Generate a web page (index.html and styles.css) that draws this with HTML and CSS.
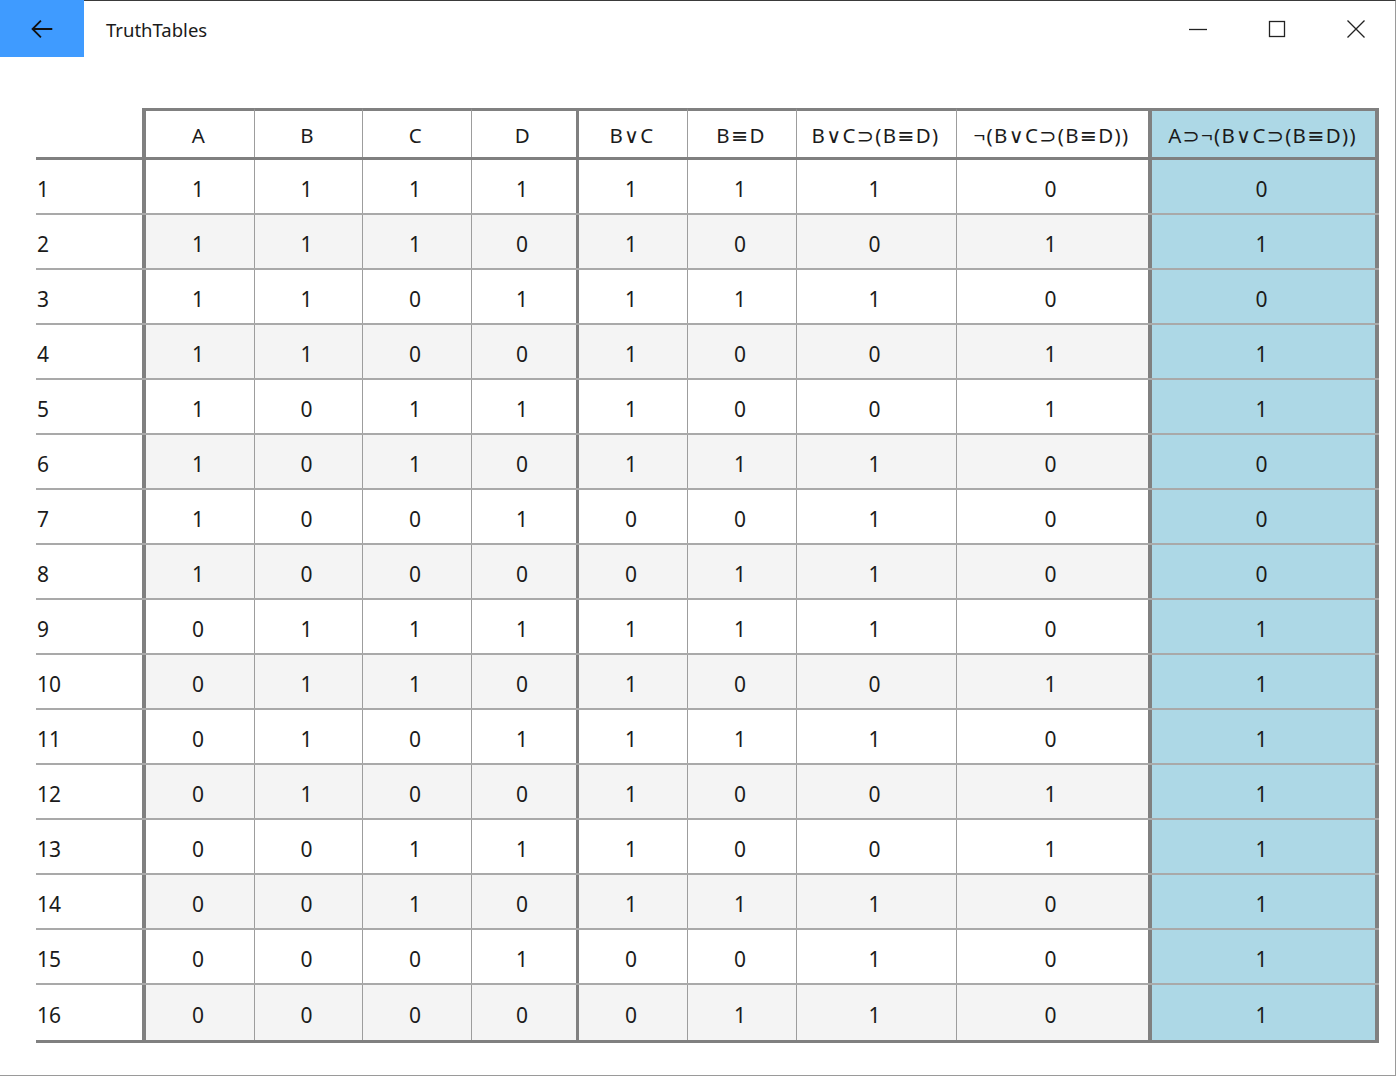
FILE: index.html
```html
<!DOCTYPE html>
<html>
<head>
<meta charset="utf-8">
<link rel="stylesheet" href="styles.css">
</head>
<body>
<div class="window">
  <div class="titlebar">
    <div class="back">
      <svg width="26" height="26" viewBox="0 0 24 24"><path d="M21.5 12H3.5M11 4.3L3.3 12L11 19.7" fill="none" stroke="#111" stroke-width="1.7"/></svg>
    </div>
    <div class="title">TruthTables</div>
    <div class="controls">
      <div class="ctl"><svg width="20" height="20" viewBox="0 0 20 20"><path d="M1 10.5H19" stroke="#222" stroke-width="1.3"/></svg></div>
      <div class="ctl"><svg width="20" height="20" viewBox="0 0 20 20"><rect x="2.5" y="2.5" width="15" height="15" fill="none" stroke="#222" stroke-width="1.3"/></svg></div>
      <div class="ctl"><svg width="20" height="20" viewBox="0 0 20 20"><path d="M1.5 1.5L18.5 18.5M18.5 1.5L1.5 18.5" stroke="#222" stroke-width="1.3"/></svg></div>
    </div>
  </div>
  <div class="content">
    <div class="tt" id="tt"></div>
  </div>
</div>
<script src="app.js"></script>
</body>
</html>
```
FILE: app.js
```js
(function(){
  var heads=["A","B","C","D","B\u2228C","B\u2261D","B\u2228C\u2283(B\u2261D)","\u00ac(B\u2228C\u2283(B\u2261D))","A\u2283\u00ac(B\u2228C\u2283(B\u2261D))"];
  var cls=["c1","c2","c3","c4","c5","c6","c7","c8","c9"];
  var tt=document.getElementById("tt");
  function row(vals,label,rc){
    var r=document.createElement("div");
    r.className="row "+rc;
    var l=document.createElement("div");
    l.className="cell lab";
    l.textContent=label;
    r.appendChild(l);
    for(var i=0;i<vals.length;i++){
      var c=document.createElement("div");
      c.className="cell "+cls[i];
      c.textContent=vals[i];
      r.appendChild(c);
    }
    tt.appendChild(r);
  }
  row(heads,"","head");
  for(var n=0;n<16;n++){
    var A=(n<8)?1:0, B=((n>>2)&1)?0:1, C=((n>>1)&1)?0:1, D=(n&1)?0:1;
    var bc=(B||C)?1:0, bd=(B===D)?1:0, imp=(!bc||bd)?1:0, neg=imp?0:1, res=(!A||neg)?1:0;
    var rc=(n%2===1?"even":"odd")+(n===15?" last":"");
    row([A,B,C,D,bc,bd,imp,neg,res],String(n+1),rc);
  }
})();
```
FILE: styles.css
```css
html, body {
  margin: 0;
  padding: 0;
  background: #ffffff;
}
body {
  font-family: "Noto Sans", "DejaVu Sans", sans-serif;
  color: #1b1b1b;
}
.window {
  width: 1396px;
  height: 1076px;
  box-sizing: border-box;
  border-right: 1px solid #9a9a9a;
  border-bottom: 1px solid #9a9a9a;
  border-top: 1px solid #3a3a3a;
  background: #fff;
}
.titlebar {
  display: flex;
  align-items: center;
  height: 56px;
}
.back {
  width: 84px;
  height: 57px;
  margin-top: -1px;
  background: #3f9bff;
  display: flex;
  align-items: center;
  justify-content: center;
}
.title {
  margin-left: 22px;
  font-family: "Noto Sans", sans-serif;
  font-size: 18.5px;
  letter-spacing: 0;
  color: #1a1a1a;
}
.controls {
  margin-left: auto;
  display: flex;
}
.ctl {
  width: 79px;
  height: 56px;
  display: flex;
  align-items: center;
  justify-content: center;
}
.content {
  padding-top: 51px;
  padding-left: 36px;
}
.tt {
  display: flex;
  flex-direction: column;
}
.row {
  display: flex;
  height: 55px;
  box-sizing: border-box;
  border-bottom: 2px solid #a9a9a9;
  width: 1343px;
}
.row.head {
  height: 52px;
  border-bottom: 3px solid #808080;
}
.row.last {
  height: 58px;
  border-bottom: 3px solid #808080;
}
.cell {
  box-sizing: border-box;
  display: flex;
  align-items: center;
  justify-content: center;
  font-size: 21px;
  padding-top: 4px;
  padding-right: 4px;
  border-left: 1px solid #9d9d9d;
  height: 100%;
}
.row.even .cell {
  background: #f4f4f4;
}
.row.head .cell {
  border-top: 3px solid #808080;
  font-size: 20.5px;
  letter-spacing: 1.3px;
  padding-top: 2px;
  padding-right: 2px;
}
.row.head .cell.lab {
  border-top-color: transparent;
}
.cell.lab {
  width: 106px;
  border-left: none;
  justify-content: flex-start;
  padding-left: 1px;
  background: #fff !important;
}
.c1 { width: 112px; border-left: 4px solid #808080; }
.c2 { width: 108px; }
.c3 { width: 109px; }
.c4 { width: 105px; }
.c5 { width: 111px; border-left: 3px solid #808080; }
.c6 { width: 109px; }
.c7 { width: 160px; }
.c8 { width: 192px; }
.row .cell.c9 {
  width: 231px;
  border-left: 4px solid #808080;
  border-right: 4px solid #808080;
  background: #add8e6;
}
```
